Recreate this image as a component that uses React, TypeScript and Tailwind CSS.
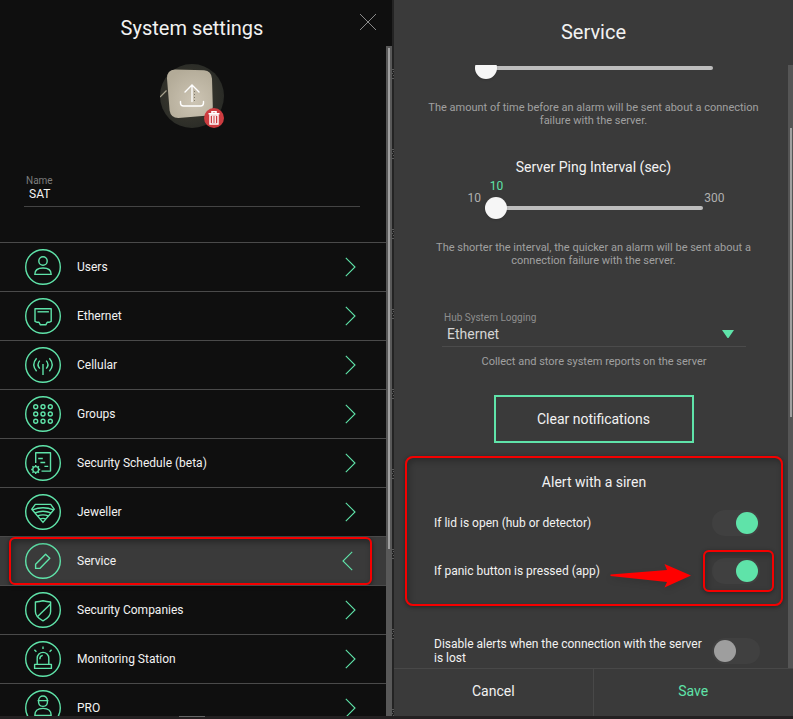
import { useState } from "react";
import type { ReactNode } from "react";

type MenuItem = {
  label: string;
  icon: ReactNode;
};

const menuItems: MenuItem[] = [
  {
    label: "Users",
    icon: (
      <>
        <circle cx="18" cy="12" r="4.2" />
        <path d="M9.8 25.4c0-4.4 3.4-6.4 8.2-6.4s8.2 2 8.2 6.4z" />
      </>
    ),
  },
  {
    label: "Ethernet",
    icon: (
      <>
        <path d="M10 10.7h16.2v12.6l-2.2 1h-1.8l-1.4 2.5h-5.4l-1.4-2.5h-1.8l-2.2-1z" />
        <path d="M12.5 13.8h11.4" />
      </>
    ),
  },
  {
    label: "Cellular",
    icon: (
      <>
        <path d="M18 17v11" />
        <path d="M14.8 13.6q-3.6 4 0 8M21.2 13.6q3.6 4 0 8" />
        <path d="M11.6 11.2q-5.6 6.4 0 13M24.4 11.2q5.6 6.4 0 13" />
      </>
    ),
  },
  {
    label: "Groups",
    icon: (
      <>
        {[10.7, 18, 25.3].map((y) =>
          [10.7, 18, 25.3].map((x) => <circle key={`${x}-${y}`} cx={x} cy={y} r="2" />)
        )}
      </>
    ),
  },
  {
    label: "Security Schedule (beta)",
    icon: (
      <>
        <path d="M10.7 18V7.7h14.8v18.4h-9" />
        <path d="M13.2 13.5h4.6M15.4 17.5h4.8M19.4 21.4h3.8" />
        <circle cx="10.7" cy="24.5" r="2.9" />
        <path d="M10.7 20v1.6M10.7 27.4V29M6.2 24.5h1.6M13.6 24.5h1.6M7.5 21.3l1.1 1.1M12.8 26.6l1.1 1.1M13.9 21.3l-1.1 1.1M8.6 26.6l-1.1 1.1" />
      </>
    ),
  },
  {
    label: "Jeweller",
    icon: (
      <>
        <path d="M10.3 10.4h15.4l3.5 4.8L18 28.4 6.8 15.2z" />
        <path d="M7.4 15.8q10.6-4 21.2 0M10 18.8q8-3.2 16 0M12.6 22q5.4-2.2 10.8 0M15.2 25q2.8-1.2 5.6 0" />
      </>
    ),
  },
  {
    label: "Service",
    icon: <path d="M20.6 11.2l4.2 4-10 10.200h-4.200v-4.200z" />,
  },
  {
    label: "Security Companies",
    icon: (
      <>
        <path d="M10.4 10q4-.3 7.6-1.2 3.6.9 7.6 1.2v9.5q0 5.5-7.6 9.3-7.6-3.8-7.6-9.3z" />
        <path d="M25.3 12.2L12.6 24.6" />
      </>
    ),
  },
  {
    label: "Monitoring Station",
    icon: (
      <>
        <path d="M9.6 23.4h16.8v4H9.6z" />
        <path d="M12.2 23.4v-6.2a5.8 5.8 0 0111.6 0v6.2" />
        <path d="M14.8 18.2q0-3.4 3-3.8" />
        <path d="M18 5.5v2.6M9.4 8.7l2 2M26.6 8.7l-2 2" />
      </>
    ),
  },
  {
    label: "PRO",
    icon: (
      <>
        <path d="M13.6 10.4a4.4 4.4 0 018.8 0" />
        <path d="M12.6 10.6h10.8M13.6 10.6q-.6 5.6 4.4 5.8 5-.2 4.4-5.8" />
        <path d="M9.8 25.4c0-4.8 3.4-7 8.2-7s8.2 2.2 8.2 7z" />
      </>
    ),
  },
];

function MenuRow({ item, active, onSelect }: { item: MenuItem; active: boolean; onSelect: () => void }) {
  return (
    <li className={`relative border-t border-[#4a4a4a] ${active ? "bg-[#3a3a3a]" : ""}`}>
      <button type="button" onClick={onSelect} className="flex h-12 w-full items-center pl-[25px] pr-[30px] text-left">
        <svg
          viewBox="0 0 36 36"
          className="size-9 shrink-0"
          fill="none"
          stroke="#5fe3a9"
          strokeWidth="1.4"
          strokeLinejoin="round"
          aria-hidden="true"
        >
          <circle cx="18" cy="18" r="17.3" />
          {item.icon}
        </svg>
        <span className="ml-4 flex-1 text-[12px]">{item.label}</span>
        <svg
          viewBox="0 0 11 20"
          className={`h-5 w-[11px] ${active ? "mr-[3px] rotate-180" : ""}`}
          fill="none"
          stroke="#5fe3a9"
          strokeWidth="1.1"
          aria-hidden="true"
        >
          <path d="M.8.8l9.2 9.2L.8 19.2" />
        </svg>
      </button>
      {active && (
        <div className="pointer-events-none absolute inset-y-0 left-[9px] right-[14px] rounded-md border-2 border-[#f40000] shadow-[0_1px_4px_rgba(0,0,0,0.5),inset_2px_3px_6px_rgba(0,0,0,0.35)]" />
      )}
    </li>
  );
}

function HubPhoto() {
  return (
    <div className="relative mx-auto size-16">
      <button type="button" aria-label="Upload photo" className="block">
        <svg viewBox="0 0 64 64" className="size-16" fill="none" aria-hidden="true">
          <defs>
            <radialGradient id="photo" cx="0.45" cy="0.5" r="0.6">
              <stop offset="0.5" stopColor="#35342c" />
              <stop offset="1" stopColor="#272925" />
            </radialGradient>
            <radialGradient id="device" cx="0.6" cy="0.65" r="0.7">
              <stop offset="0" stopColor="#cdc5b4" />
              <stop offset="1" stopColor="#b3ab98" />
            </radialGradient>
          </defs>
          <circle cx="32" cy="32" r="32" fill="url(#photo)" />
          <path d="M0 33l6.5-6.5" stroke="#a9a38f" strokeWidth="1.2" />
          <path
            d="M15 5.600l29 .6q7.500.6 8 8.500l.8 28q0 8.500-7.500 9l-27 2.300q-7.500 0-8.700-7.500l-2.600-32q-.2-8.400 8-8.900z"
            fill="url(#device)"
          />
          <path d="M34.500 27v10" stroke="#807a6c" strokeDasharray="1 2" />
          <g stroke="#fff" strokeWidth="1.4" strokeLinecap="round">
            <path d="M32 21.500v16M25 28l7-7 7 7" />
            <path d="M20.500 37.500v1.500q0 3 3 3h17q3 0 3-3v-1.500" />
          </g>
        </svg>
      </button>
      <button
        type="button"
        aria-label="Delete photo"
        className="absolute bottom-0 right-0 grid size-5 place-items-center rounded-full bg-[#cd3c40]"
      >
        <svg viewBox="0 0 20 20" className="size-5" fill="none" stroke="#fff" aria-hidden="true">
          <path d="M4.500 5.700h11M8 5V3.800h4V5" strokeWidth="1.600" />
          <path d="M6 7h8v9H6z" strokeWidth="1.400" />
          <path d="M8.500 8v7M10 8v7M11.500 8v7" strokeWidth=".9" />
        </svg>
      </button>
    </div>
  );
}

function SystemSettings() {
  const [selected, setSelected] = useState("Service");
  return (
    <section className="relative flex min-h-0 flex-col bg-[#0f0f0f]">
      <header className="flex h-[46px] shrink-0 items-center justify-center pr-2 pt-[10px]">
        <h1 className="text-[20px] leading-6">System settings</h1>
        <button type="button" aria-label="Close" className="absolute right-[15px] top-[13px]">
          <svg viewBox="0 0 18 18" className="size-[18px]" stroke="#8a8a8a" strokeWidth="1" aria-hidden="true">
            <path d="M1 1l16 16M17 1L1 17" />
          </svg>
        </button>
      </header>
      <div className="flex min-h-0 flex-1">
        <div className="min-w-0 flex-1 overflow-hidden">
          <div className="pl-6 pr-[26px] pt-[18px]">
            <HubPhoto />
            <div className="mt-[47px] border-b border-[#444] pb-[5px]">
              <label htmlFor="hub-name" className="block pl-[2px] text-[10px] leading-3 text-[#7d7d7d]">
                Name
              </label>
              <input
                id="hub-name"
                defaultValue="SAT"
                className="block h-[14px] w-full bg-transparent pl-[5px] text-[12px] leading-[14px] outline-none"
              />
            </div>
          </div>
          <ul className="mt-[35px]">
            {menuItems.map((item) => (
              <MenuRow
                key={item.label}
                item={item}
                active={item.label === selected}
                onSelect={() => setSelected(item.label)}
              />
            ))}
          </ul>
        </div>
        <div className="w-[6px] bg-[#585858] px-[2px] pt-[2px]">
          <div className="h-3/4 bg-[#a0a0a0]" />
        </div>
      </div>
    </section>
  );
}

function Slider({ label, className }: { label: string; className: string }) {
  return (
    <input
      type="range"
      aria-label={label}
      min={10}
      max={300}
      defaultValue={10}
      className={`mx-auto block h-[22px] appearance-none bg-transparent [&::-webkit-slider-runnable-track]:h-1 [&::-webkit-slider-runnable-track]:rounded-full [&::-webkit-slider-runnable-track]:bg-[#bdbdbd] [&::-webkit-slider-thumb]:-mt-[9px] [&::-webkit-slider-thumb]:size-[22px] [&::-webkit-slider-thumb]:appearance-none [&::-webkit-slider-thumb]:rounded-full [&::-webkit-slider-thumb]:bg-[#f6f6f6] [&::-webkit-slider-thumb]:shadow ${className}`}
    />
  );
}

function Toggle({ label, checked }: { label: string; checked?: boolean }) {
  return (
    <input
      type="checkbox"
      role="switch"
      aria-label={label}
      defaultChecked={checked}
      className="block h-[26px] w-12 shrink-0 appearance-none rounded-full bg-[#404040] p-[2px] before:block before:size-[22px] before:rounded-full before:bg-[#9e9e9e] checked:before:ml-[22px] checked:before:bg-[#5fe3a9]"
    />
  );
}

function ServicePanel() {
  return (
    <section className="flex min-h-0 flex-col bg-[#3a3a3a]">
      <header className="flex h-[65px] shrink-0 items-center justify-center pb-[2px]">
        <h2 className="text-[20px] leading-6">Service</h2>
      </header>
      <div className="relative min-h-0 flex-1 overflow-hidden">
        <div className="-mt-2">
          <Slider label="Delay of connection failure alarm" className="w-[238px]" />
          <p className="mx-auto mt-[22px] max-w-[350px] text-center text-[11px] leading-[13px] text-[#a0a0a0]">
            The amount of time before an alarm will be sent about a connection failure with the server.
          </p>
          <h3 className="mt-[30px] text-center text-[14px] leading-5">Server Ping Interval (sec)</h3>
          <div className="mx-auto flex w-[262px] justify-between pl-[5px] pt-px text-[12px] leading-4 text-[#b0b0b0]">
            <span className="mt-3 w-[18px]">10</span>
            <span className="w-[22px] text-center text-[#5fe3a9]">10</span>
            <span className="mt-3 flex-1 text-right">300</span>
          </div>
          <Slider label="Server Ping Interval (sec)" className="-mt-[9px] w-[218px]" />
          <p className="mx-auto mt-[22px] max-w-[350px] text-center text-[11px] leading-[13px] text-[#a0a0a0]">
            The shorter the interval, the quicker an alarm will be sent about a connection failure with the server.
          </p>

          <div className="ml-12 mr-[47px] mt-11">
            <label htmlFor="hub-logging" className="block pl-[2px] text-[10px] leading-[14px] text-[#8e8e8e]">
              Hub System Logging
            </label>
            <div className="relative border-b border-[#4b4b4b]">
              <select
                id="hub-logging"
                defaultValue="Ethernet"
                className="block h-[21px] w-full appearance-none bg-transparent pb-1 pl-[5px] text-[14px] leading-4 text-[#d5d5d5] outline-none"
              >
                <option>Ethernet</option>
                <option>Off</option>
              </select>
              <svg viewBox="0 0 12 8" className="pointer-events-none absolute right-3 top-[5px] h-2 w-3" aria-hidden="true">
                <path d="M0 0h12L6.500 8h-1z" fill="#5fe3a9" />
              </svg>
            </div>
            <p className="mt-2 text-center text-[11px] leading-[13px] text-[#a0a0a0]">
              Collect and store system reports on the server
            </p>
          </div>

          <button
            type="button"
            className="mx-auto mt-[27px] block h-12 w-[200px] border-2 border-[#5fe3a9] text-[14px] leading-5"
          >
            Clear notifications
          </button>

          <section className="ml-[11px] mr-[10px] mt-[13px] h-[150px] rounded-lg border-2 border-[#f40000] pl-[27px] pr-[21px] pt-4 shadow-[0_1px_4px_rgba(0,0,0,0.4),inset_2px_3px_6px_rgba(0,0,0,0.25)]">
            <h3 className="pr-[6px] text-center text-[14px] leading-4">Alert with a siren</h3>
            <div className="mt-5 flex items-center justify-between text-[12px]">
              <span>If lid is open (hub or detector)</span>
              <Toggle label="If lid is open (hub or detector)" checked />
            </div>
            <div className="relative mt-[22px] flex items-center justify-between text-[12px]">
              <span>If panic button is pressed (app)</span>
              <Toggle label="If panic button is pressed (app)" checked />
              <div className="pointer-events-none absolute -inset-y-2 -right-[14px] w-[71px] rounded-md border-2 border-[#f40000] shadow-[0_1px_4px_rgba(0,0,0,0.4),inset_2px_3px_6px_rgba(0,0,0,0.25)]" />
              <svg
                viewBox="0 0 82 26"
                className="pointer-events-none absolute right-[68px] top-[5px] h-[26px] w-[82px] drop-shadow-md"
                aria-hidden="true"
              >
                <path d="M.5 11.500L57 7 54.500 1 81 12.500 54.500 24.500 57 19 .5 13z" fill="#ff0000" />
              </svg>
            </div>
          </section>

          <div className="ml-10 mr-[33px] mt-[31px] flex items-center justify-between text-[12px] leading-[14px]">
            <span className="max-w-[275px]">Disable alerts when the connection with the server is lost</span>
            <Toggle label="Disable alerts when the connection with the server is lost" />
          </div>
        </div>
        <div className="absolute inset-y-0 right-0 w-[5px] bg-[#555]">
          <div className="absolute left-[2px] top-[63px] h-[48%] w-[2px] bg-[#a0a0a0]" />
        </div>
      </div>
      <footer className="grid h-12 shrink-0 grid-cols-2 border-t border-[#484848] text-[14px]">
        <button type="button" className="border-r border-[#484848] pb-[2px]">
          Cancel
        </button>
        <button type="button" className="pb-[2px] text-[#5fe3a9]">
          Save
        </button>
      </footer>
    </section>
  );
}

// Sliver of the device list that stays visible between the two panels
function ListSliver() {
  return (
    <div className="flex flex-col gap-[68px] overflow-hidden bg-[#232323] pt-[68px]" aria-hidden="true">
      {Array.from({ length: 9 }, (_, i) => (
        <svg key={i} viewBox="0 0 2 12" className="h-3 w-[2px] shrink-0" stroke="#5c5c5c">
          <path d="M0 1.500h2M1 3.500h1M0 5.500h1M1 7.500h1M0 10.500h2" />
        </svg>
      ))}
    </div>
  );
}

export default function App() {
  return (
    <div className="flex h-screen flex-col bg-[#232021] font-[Roboto,sans-serif] text-[#f2f2f2]">
      <main className="grid min-h-0 flex-1 grid-cols-[minmax(0,392fr)_2px_minmax(0,399fr)] grid-rows-[minmax(0,1fr)]">
        <SystemSettings />
        <ListSliver />
        <ServicePanel />
      </main>
      <div className="flex h-[3px] shrink-0 pl-[179px]">
        <div className="h-px w-[26px] bg-[#666]" />
      </div>
    </div>
  );
}
